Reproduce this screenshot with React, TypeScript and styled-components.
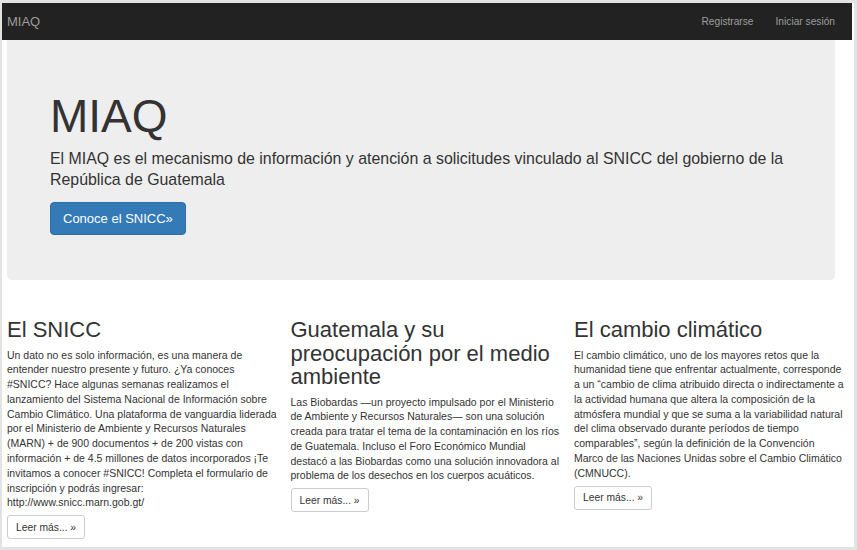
import React from "react";
import styled, { createGlobalStyle } from "styled-components";

const Global = createGlobalStyle`
  html, body { margin: 0; padding: 0; }
  body {
    background: #e3e3e3;
    font-family: "Liberation Sans", Arial, Helvetica, sans-serif;
    color: #333;
  }
  * { box-sizing: border-box; }
`;

const Page = styled.div`
  margin: 3px 3px 0 2px;
  height: 544px;
  background: #fff;
  overflow: hidden;
`;

const Navbar = styled.nav`
  height: 37px;
  margin-right: 2px;
  background: #222;
  display: flex;
  align-items: center;
  justify-content: space-between;
  padding: 0 6px 0 5px;
`;

const Brand = styled.a`
  color: #9d9d9d;
  font-size: 13px;
  text-decoration: none;
`;

const NavLinks = styled.div`
  display: flex;
  align-items: center;
`;

const NavLink = styled.a`
  color: #9d9d9d;
  font-size: 10.2px;
  padding: 0 11px;
  text-decoration: none;
`;

const Jumbotron = styled.section`
  margin: 0 19px 0 5px;
  background: #eee;
  border-radius: 0 0 5px 5px;
  padding: 50px 43px 45px 43px;
`;

const Title = styled.h1`
  margin: 0 0 6px 0;
  font-size: 46px;
  line-height: 52px;
  font-weight: 400;
  color: #333;
`;

const Lead = styled.p`
  margin: 0 0 12px 0;
  font-size: 15.9px;
  line-height: 21px;
  color: #333;
`;

const PrimaryButton = styled.a`
  display: inline-flex;
  align-items: center;
  height: 33px;
  padding: 0 12px;
  background: #337ab7;
  border: 1px solid #2e6da4;
  border-radius: 4px;
  color: #fff;
  font-size: 13px;
  text-decoration: none;
`;

const Columns = styled.div`
  display: grid;
  grid-template-columns: repeat(3, 272px);
  column-gap: 11.5px;
  padding-left: 5px;
  margin-top: 38px;
`;

const Column = styled.div`
  display: flex;
  flex-direction: column;
  align-items: flex-start;
`;

const Heading = styled.h2`
  margin: 0 0 6px 0;
  font-size: 22px;
  line-height: 23.5px;
  font-weight: 400;
  color: #333;
`;

const Text = styled.p`
  margin: 0 0 5px 0;
  font-size: 10.5px;
  line-height: 14.8px;
  color: #333;
`;

const DefaultButton = styled.a`
  display: inline-flex;
  align-items: center;
  height: 24px;
  padding: 0 8px;
  background: #fff;
  border: 1px solid #ccc;
  border-radius: 3px;
  color: #333;
  font-size: 10.3px;
  text-decoration: none;
`;

const columns = [
  {
    title: "El SNICC",
    text:
      "Un dato no es solo información, es una manera de entender nuestro presente y futuro. ¿Ya conoces #SNICC? Hace algunas semanas realizamos el lanzamiento del Sistema Nacional de Información sobre Cambio Climático. Una plataforma de vanguardia liderada por el Ministerio de Ambiente y Recursos Naturales (MARN) + de 900 documentos + de 200 vistas con información + de 4.5 millones de datos incorporados ¡Te invitamos a conocer #SNICC! Completa el formulario de inscripción y podrás ingresar: http://www.snicc.marn.gob.gt/",
  },
  {
    title: "Guatemala y su preocupación por el medio ambiente",
    text:
      "Las Biobardas —un proyecto impulsado por el Ministerio de Ambiente y Recursos Naturales— son una solución creada para tratar el tema de la contaminación en los ríos de Guatemala. Incluso el Foro Económico Mundial destacó a las Biobardas como una solución innovadora al problema de los desechos en los cuerpos acuáticos.",
  },
  {
    title: "El cambio climático",
    text:
      "El cambio climático, uno de los mayores retos que la humanidad tiene que enfrentar actualmente, corresponde a un “cambio de clima atribuido directa o indirectamente a la actividad humana que altera la composición de la atmósfera mundial y que se suma a la variabilidad natural del clima observado durante períodos de tiempo comparables”, según la definición de la Convención Marco de las Naciones Unidas sobre el Cambio Climático (CMNUCC).",
  },
];

export default function App() {
  return (
    <>
      <Global />
      <Page>
        <Navbar>
          <Brand href="#">MIAQ</Brand>
          <NavLinks>
            <NavLink href="#">Registrarse</NavLink>
            <NavLink href="#">Iniciar sesión</NavLink>
          </NavLinks>
        </Navbar>
        <Jumbotron>
          <Title>MIAQ</Title>
          <Lead>
            El MIAQ es el mecanismo de información y atención a solicitudes
            vinculado al SNICC del gobierno de la República de Guatemala
          </Lead>
          <PrimaryButton href="#">Conoce el SNICC»</PrimaryButton>
        </Jumbotron>
        <Columns>
          {columns.map((c) => (
            <Column key={c.title}>
              <Heading>{c.title}</Heading>
              <Text>{c.text}</Text>
              <DefaultButton href="#">Leer más... »</DefaultButton>
            </Column>
          ))}
        </Columns>
      </Page>
    </>
  );
}
